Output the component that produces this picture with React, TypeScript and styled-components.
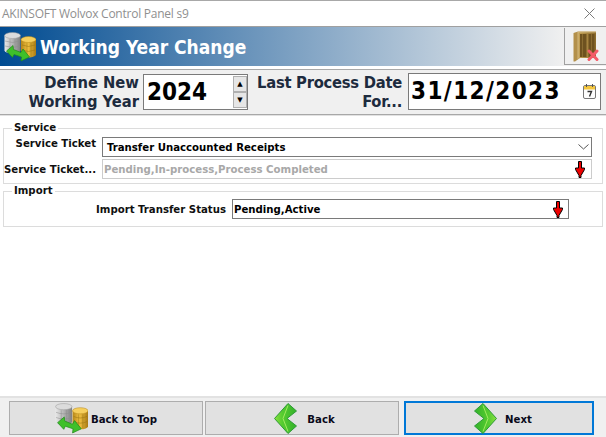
import styled, { createGlobalStyle } from 'styled-components';

const Global = createGlobalStyle`
  html, body { margin: 0; padding: 0; background: #ffffff; }
  body { font-family: Tahoma, "Liberation Sans", sans-serif; overflow: hidden; }
  * { box-sizing: border-box; }
`;

function DbIcon({ size = 32 }: { size?: number }) {
  return (
    <svg width={size} height={size} viewBox="0 0 32 32">
      <defs>
        <linearGradient id="silver" x1="0" x2="1" y1="0" y2="0">
          <stop offset="0" stopColor="#e8e8e8" />
          <stop offset="0.5" stopColor="#b4b4b4" />
          <stop offset="1" stopColor="#808080" />
        </linearGradient>
        <linearGradient id="gold" x1="0" x2="1" y1="0" y2="0">
          <stop offset="0" stopColor="#b58618" />
          <stop offset="0.45" stopColor="#f0c040" />
          <stop offset="1" stopColor="#a87a14" />
        </linearGradient>
      </defs>
      <path d="M0.5 4.5 v15 a8 3 0 0 0 16 0 v-15 z" fill="url(#silver)" />
      <ellipse cx="8.5" cy="4.5" rx="8" ry="3" fill="#dcdcdc" stroke="#9a9a9a" strokeWidth="0.5" />
      <path d="M1 10 q7.5 3 15 0 M1 15 q7.5 3 15 0 M6 8 v14 M11 8 v14" stroke="#8c8c8c" strokeWidth="0.5" fill="none" />
      <path d="M17 8.5 v15 a7.5 3 0 0 0 15 0 v-15 z" fill="url(#gold)" />
      <ellipse cx="24.5" cy="8.5" rx="7.5" ry="3" fill="#f6cf5c" stroke="#b58618" strokeWidth="0.5" />
      <path d="M18 14 q6.5 3 13 0 M18 19 q6.5 3 13 0 M23 12 v14 M27 12 v14" stroke="#96700f" strokeWidth="0.5" fill="none" />
      <path d="M2.5 20 L9 14.5 L9.5 18.5 L17 21.5 L19 18 L25.5 26 L17 30 L17.5 26 L10 23.5 L8.5 26.5 Z" fill="#3fc02a" stroke="#1f8a1a" strokeWidth="0.7" strokeLinejoin="round" />
    </svg>
  );
}

function DoorIcon() {
  return (
    <svg width="26" height="31" viewBox="0 0 26 31">
      <defs>
        <linearGradient id="door" x1="0" x2="1" y1="0" y2="0">
          <stop offset="0" stopColor="#c5a257" />
          <stop offset="1" stopColor="#8a6a2c" />
        </linearGradient>
      </defs>
      <path d="M0.5 2 L5 0.5 H23 V27 H7 L2 30.5 H0.5 Z" fill="#b3904a" />
      <path d="M5 1 H23 V27 H5 Z" fill="url(#door)" />
      <path d="M5 1 V28 M5 1 H23" stroke="#d8c08a" strokeWidth="0.8" fill="none" />
      <path d="M7 3 h6.5 v23 h-6.5 z M15.5 3 h6 v23 h-6 z" fill="#6e5220" />
      <path d="M9.5 3 v23 M18.5 3 v23" stroke="#8a6c32" strokeWidth="1" />
      <path d="M16 20 L24 28.5 M24 20 L16 28.5" stroke="#f45a68" strokeWidth="3" strokeLinecap="round" />
    </svg>
  );
}

function Chevron({ flip = false }: { flip?: boolean }) {
  return (
    <svg width="23" height="31" viewBox="0 0 23 31" style={flip ? { transform: 'scaleX(-1)' } : undefined}>
      <defs>
        <linearGradient id="chev" x1="0" x2="1" y1="0" y2="0">
          <stop offset="0" stopColor="#8ae040" />
          <stop offset="0.35" stopColor="#56cc30" />
          <stop offset="1" stopColor="#33b22a" />
        </linearGradient>
      </defs>
      <path d="M14 0.5 L0.5 15.5 L14 30.5 L22.5 23 L13 15.5 L22.5 8 Z" fill="url(#chev)" stroke="#2e9a38" strokeWidth="1" strokeLinejoin="round" />
      <path d="M14 2.5 L9 15.5 L14 28.5" stroke="#a2ea60" strokeWidth="1" fill="none" />
    </svg>
  );
}

function RedArrow() {
  return (
    <svg width="10" height="17" viewBox="0 0 10 17">
      <path d="M3.5 0.5 h3 v6.5 h3 v1.5 l-3.5 6 v2 h-2 v-2 l-3.5 -6 v-1.5 h3 z" fill="#ee0000" stroke="#000" strokeWidth="1" strokeLinejoin="round" />
    </svg>
  );
}

function CalendarIcon() {
  return (
    <svg width="13" height="15" viewBox="0 0 13 15">
      <rect x="0.5" y="1.5" width="12" height="13" rx="1.5" fill="#fdfdfd" stroke="#777" />
      <rect x="1" y="2" width="11" height="3.5" fill="#f4c63e" />
      <path d="M3.5 0 v3 M9.5 0 v3" stroke="#555" strokeWidth="1" />
      <path d="M4.5 7.5 h4 l-2 5" stroke="#333" strokeWidth="1.4" fill="none" />
    </svg>
  );
}

export default function App() {
  return (
    <Window>
      <Global />
      <TitleBar>
        <TitleText>AKINSOFT Wolvox Control Panel s9</TitleText>
        <CloseBtn>
          <svg width="11" height="11" viewBox="0 0 11 11">
            <path d="M0.5 0.5 L10.5 10.5 M10.5 0.5 L0.5 10.5" stroke="#7a7a7a" strokeWidth="1" />
          </svg>
        </CloseBtn>
      </TitleBar>
      <Banner>
        <BannerLogo><DbIcon /></BannerLogo>
        <BannerTitle>Working Year Change</BannerTitle>
        <ExitBtn><DoorIcon /></ExitBtn>
      </Banner>
      <TopRow>
        <BigLabel $width={139}>Define New<br />Working Year</BigLabel>
        <YearBox>
          <BigValue>2024</BigValue>
          <Spin>
            <SpinBtn>▲</SpinBtn>
            <SpinBtn>▼</SpinBtn>
          </Spin>
        </YearBox>
        <BigLabel $width={145} $tight>Last Process Date<br />For...</BigLabel>
        <DateBox>
          <BigValue $spaced>31/12/2023</BigValue>
          <CalendarIcon />
        </DateBox>
      </TopRow>
      <Main>
        <Group $top={2} $bottom={2}>
          <GroupTitle>Service</GroupTitle>
          <FieldRow $labelWidth={92}>
            <FieldLabel $raised>Service Ticket</FieldLabel>
            <Input $left={4} $right={2}>
              Transfer Unaccounted Receipts
              <svg width="11" height="6" viewBox="0 0 11 6">
                <path d="M0.5 0.5 L5.5 5 L10.5 0.5" stroke="#555" fill="none" />
              </svg>
            </Input>
          </FieldRow>
          <FieldRow $labelWidth={92}>
            <FieldLabel>Service Ticket...</FieldLabel>
            <Input $disabled $left={1} $right={6}>
              Pending,In-process,Process Completed
              <RedArrow />
            </Input>
          </FieldRow>
        </Group>
        <Group $top={1} $bottom={5}>
          <GroupTitle>Import</GroupTitle>
          <FieldRow $labelWidth={222} $inset={33}>
            <FieldLabel>Import Transfer Status</FieldLabel>
            <Input $left={1} $right={5}>
              Pending,Active
              <RedArrow />
            </Input>
          </FieldRow>
        </Group>
      </Main>
      <Footer>
        <FootBtn $gap={3}><DbIcon size={33} /><FootText>Back to Top</FootText></FootBtn>
        <FootBtn $gap={10} $shift={5}><Chevron /><FootText>Back</FootText></FootBtn>
        <FootBtn $active $gap={8} $shift={8}><Chevron flip /><FootText>Next</FootText></FootBtn>
      </Footer>
    </Window>
  );
}

const Window = styled.div`
  width: 606px;
  height: 437px;
  display: flex;
  flex-direction: column;
  background: #ffffff;
  border-top: 1px solid #a8a8a8;
`;
const TitleBar = styled.div`
  height: 26px;
  flex: none;
  display: flex;
  align-items: center;
  justify-content: space-between;
  padding: 0 11px 0 2px;
  background: #ffffff;
  border-bottom: 1px solid #a0a0a0;
`;
const TitleText = styled.span`
  font-size: 12px;
  color: #8f8f8f;
  font-family: "Open Sans", "Noto Sans", sans-serif;
  letter-spacing: -0.25px;
`;
const CloseBtn = styled.span`
  display: flex;
`;
const Banner = styled.div`
  height: 39px;
  flex: none;
  display: flex;
  align-items: center;
  padding-left: 4px;
  background: linear-gradient(90deg, #004b91 0%, #f0f0f0 93%);
`;
const BannerLogo = styled.div`
  width: 36px;
  display: flex;
`;
const BannerTitle = styled.h1`
  flex: 1;
  margin: 0;
  font-size: 19px;
  font-weight: 700;
  color: #ffffff;
  font-family: "DejaVu Sans Condensed", "DejaVu Sans", sans-serif;
`;
const ExitBtn = styled.div`
  width: 42px;
  height: 37px;
  align-self: flex-start;
  margin-top: 1px;
  display: flex;
  align-items: center;
  justify-content: center;
  background: #f0f0f0;
  border-left: 1px solid #a0a0a0;
  border-bottom: 1px solid #a0a0a0;
`;
const TopRow = styled.div`
  height: 46px;
  flex: none;
  margin-top: 3px;
  display: flex;
  align-items: center;
  background: #f0f0f0;
  border-top: 1px solid #a8a8a8;
  border-bottom: 1px solid #a8a8a8;
`;
const BigLabel = styled.div<{ $width: number; $tight?: boolean }>`
  width: ${p => p.$width}px;
  flex: none;
  text-align: right;
  white-space: nowrap;
  font-size: 16.4px;
  line-height: 19px;
  font-weight: 700;
  color: #1d2b3e;
  letter-spacing: ${p => (p.$tight ? '-0.25px' : '0')};
  font-family: "DejaVu Sans Condensed", "DejaVu Sans", sans-serif;
`;
const YearBox = styled.div`
  width: 105px;
  height: 36px;
  margin: 0 9px 0 4px;
  padding: 0 0 0 3px;
  flex: none;
  display: flex;
  align-items: center;
  justify-content: space-between;
  background: #ffffff;
  border: 1px solid #7a7a7a;
`;
const BigValue = styled.span<{ $spaced?: boolean }>`
  font-size: 24px;
  font-weight: 700;
  color: #000000;
  letter-spacing: ${p => (p.$spaced ? '1.4px' : '0')};
  font-family: "DejaVu Sans Condensed", "DejaVu Sans", sans-serif;
`;
const Spin = styled.div`
  width: 14px;
  height: 32px;
  display: flex;
  flex-direction: column;
`;
const SpinBtn = styled.div`
  flex: 1;
  display: flex;
  align-items: center;
  justify-content: center;
  font-size: 7px;
  color: #000000;
  background: #e6e6e6;
  border: 1.5px solid #b0b0b0;
  font-family: "DejaVu Sans", sans-serif;
`;
const DateBox = styled.div`
  width: 193px;
  height: 37px;
  margin: 0 0 2px 6px;
  padding: 0 4px 0 2px;
  flex: none;
  display: flex;
  align-items: center;
  justify-content: space-between;
  background: #ffffff;
  border: 1px solid #7a7a7a;
`;
const Main = styled.main`
  flex: 1;
  display: flex;
  flex-direction: column;
  padding: 5px 3px 0;
  background: #ffffff;
  border-bottom: 2px solid #e2e2e2;
  border-top: 1px solid #e2e2e2;
  font-family: "DejaVu Sans Condensed", "DejaVu Sans", sans-serif;
`;
const Group = styled.fieldset<{ $top: number; $bottom: number }>`
  margin: 0;
  padding: ${p => p.$top}px 0 ${p => p.$bottom}px;
  min-width: 0;
  border: 1px solid #dcdcdc;
`;
const GroupTitle = styled.legend`
  margin-left: 8px;
  padding: 0 2px;
  font-size: 11.3px;
  line-height: 14px;
  font-weight: 700;
  color: #101010;
`;
const FieldRow = styled.div<{ $labelWidth: number; $inset?: number }>`
  display: grid;
  grid-template-columns: ${p => p.$labelWidth}px 1fr;
  column-gap: 6px;
  align-items: center;
  padding-right: ${p => p.$inset ?? 10}px;
  margin-bottom: 2px;
`;
const FieldLabel = styled.label<{ $raised?: boolean }>`
  text-align: right;
  font-size: 11.3px;
  font-weight: 700;
  color: #101010;
  white-space: nowrap;
  margin-bottom: ${p => (p.$raised ? '7px' : '0')};
`;
const Input = styled.div<{ $disabled?: boolean; $left: number; $right: number }>`
  height: 20px;
  display: flex;
  align-items: center;
  justify-content: space-between;
  padding: 0 ${p => p.$right}px 0 ${p => p.$left}px;
  font-size: 11.3px;
  font-weight: 700;
  color: ${p => (p.$disabled ? '#a8a8a8' : '#000000')};
  background: #ffffff;
  border: 1px solid ${p => (p.$disabled ? '#cccccc' : '#7a7a7a')};
`;
const Footer = styled.footer`
  height: 39px;
  flex: none;
  display: grid;
  grid-template-columns: 194px 194px 193px;
  column-gap: 2px;
  padding: 3px 9px 2px;
  background: #f0f0f0;
  font-family: "DejaVu Sans Condensed", "DejaVu Sans", sans-serif;
`;
const FootBtn = styled.button<{ $active?: boolean; $gap: number; $shift?: number }>`
  height: 34px;
  padding: 0 0 0 ${p => p.$shift ?? 0}px;
  display: flex;
  align-items: center;
  justify-content: center;
  gap: ${p => p.$gap}px;
  font: inherit;
  font-size: 11.3px;
  font-weight: 700;
  color: #0a0a1a;
  background: #e1e1e1;
  border: ${p => (p.$active ? '2px solid #0078d7' : '1px solid #adadad')};
  margin-left: ${p => (p.$active ? '3px' : '0')};
`;
const FootText = styled.span`
  padding-top: 2px;
`;
